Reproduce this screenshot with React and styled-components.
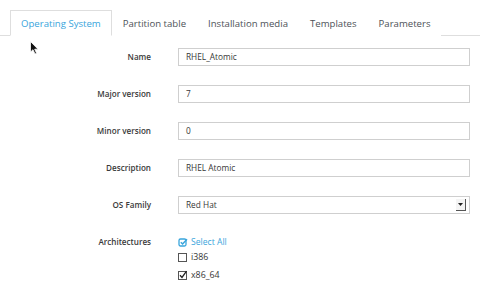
import React from "react";
import styled, { createGlobalStyle } from "styled-components";

const Global = createGlobalStyle`
  html, body { margin: 0; padding: 0; background: #fff; }
  body { font-family: "Open Sans", "Liberation Sans", sans-serif; color: #363636; }
  * { box-sizing: border-box; }
`;

const Page = styled.div`
  position: relative;
  width: 480px;
  height: 289px;
  overflow: hidden;
  padding-top: 10px;
`;

const TabBar = styled.div`
  display: flex;
  padding-left: 10px;
  border-bottom: 1px solid #dedede;
  height: 26px;
`;

const Tab = styled.div`
  height: 26px;
  padding: 0 10px;
  display: flex;
  align-items: center;
  font-size: 9.6px;
  color: ${(p) => (p.$active ? "#39a5dc" : "#4d5258")};
  border: 1px solid ${(p) => (p.$active ? "#dedede" : "transparent")};
  border-bottom-color: ${(p) => (p.$active ? "#fff" : "transparent")};
  background: #fff;
`;

const Form = styled.div`
  display: flex;
  flex-direction: column;
  gap: 19px;
  padding-top: 12px;
`;

const Row = styled.div`
  display: grid;
  grid-template-columns: 151px 292px;
  column-gap: 27px;
  align-items: ${(p) => (p.$top ? "start" : "center")};
`;

const Label = styled.div`
  text-align: right;
  font-size: 8.1px;
  font-weight: 600;
  color: #3a3a3a;
  line-height: 18px;
`;

const Input = styled.div`
  height: 18px;
  border: 1px solid #cfcfcf;
  padding: 0 7px;
  font-size: 8.3px;
  line-height: 16px;
  color: #363636;
  background: #fff;
`;

const Select = styled(Input)`
  display: flex;
  justify-content: space-between;
  align-items: center;
  padding-right: 3px;
`;

const Arrow = styled.div`
  width: 10px;
  height: 12px;
  border-right: 1px solid #555;
  border-bottom: 1px solid #555;
  background: #f4f4f4;
  display: flex;
  align-items: center;
  justify-content: center;
`;

const Checks = styled.div`
  display: flex;
  flex-direction: column;
  padding-top: 3px;
`;

const SelectAll = styled.div`
  display: flex;
  align-items: center;
  gap: 3px;
  color: #39a5dc;
  font-size: 8.6px;
  height: 12px;
`;

const CheckRow = styled.div`
  display: flex;
  align-items: center;
  gap: 3px;
  font-size: 8.8px;
  height: 12px;
  margin-top: ${(p) => p.$mt}px;
  color: #363636;
`;

const Cursor = styled.svg`
  position: absolute;
  left: 30px;
  top: 41px;
`;

const Box = ({ checked }) => (
  <svg width="10" height="10" viewBox="0 0 10 10">
    <rect x="0.5" y="1.5" width="8" height="8" fill="#fff" stroke="#555" />
    {checked && <path d="M2 5.2 L4 7.4 L8.5 1.2" fill="none" stroke="#222" strokeWidth="1.3" />}
  </svg>
);

export default function App() {
  return (
    <Page>
      <Global />
      <TabBar>
        <Tab $active>Operating System</Tab>
        <Tab>Partition table</Tab>
        <Tab>Installation media</Tab>
        <Tab>Templates</Tab>
        <Tab>Parameters</Tab>
      </TabBar>
      <Form>
        <Row>
          <Label>Name</Label>
          <Input>RHEL_Atomic</Input>
        </Row>
        <Row>
          <Label>Major version</Label>
          <Input>7</Input>
        </Row>
        <Row>
          <Label>Minor version</Label>
          <Input>0</Input>
        </Row>
        <Row>
          <Label>Description</Label>
          <Input>RHEL Atomic</Input>
        </Row>
        <Row>
          <Label>OS Family</Label>
          <Select>
            <span>Red Hat</span>
            <Arrow>
              <svg width="5" height="3" viewBox="0 0 5 3"><path d="M0 0 L5 0 L2.5 3 Z" fill="#222" /></svg>
            </Arrow>
          </Select>
        </Row>
        <Row $top>
          <Label>Architectures</Label>
          <Checks>
            <SelectAll>
              <svg width="10" height="10" viewBox="0 0 10 10">
                <rect x="1" y="2" width="7" height="7" rx="1.5" fill="none" stroke="#39a5dc" strokeWidth="1.3" />
                <path d="M2.8 5.2 L4.6 7 L9 2.2" fill="none" stroke="#39a5dc" strokeWidth="1.5" />
              </svg>
              Select All
            </SelectAll>
            <CheckRow $mt={3}>
              <Box />
              i386
            </CheckRow>
            <CheckRow $mt={6}>
              <Box checked />
              x86_64
            </CheckRow>
          </Checks>
        </Row>
      </Form>
      <Cursor width="10" height="15" viewBox="0 0 10 15">
        <path d="M0.5 0.5 L0.5 11 L3 8.7 L5 13 L6.6 12.3 L4.7 8.2 L8 8.2 Z" fill="#111" stroke="#fff" strokeWidth="0.8" />
      </Cursor>
    </Page>
  );
}
